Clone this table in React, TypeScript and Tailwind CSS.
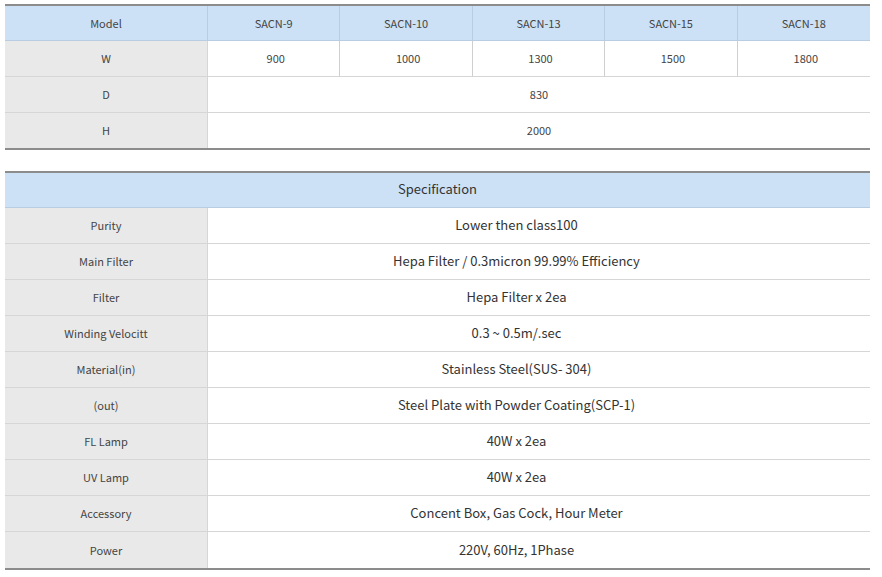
const models = ["SACN-9", "SACN-10", "SACN-13", "SACN-15", "SACN-18"];
const widths = ["900", "1000", "1300", "1500", "1800"];

const specs: [string, string][] = [
	["Purity", "Lower then class100"],
	["Main Filter", "Hepa Filter / 0.3micron 99.99% Efficiency"],
	["Filter", "Hepa Filter x 2ea"],
	["Winding Velocitt", "0.3 ~ 0.5m/.sec"],
	["Material(in)", "Stainless Steel(SUS- 304)"],
	["(out)", "Steel Plate with Powder Coating(SCP-1)"],
	["FL Lamp", "40W x 2ea"],
	["UV Lamp", "40W x 2ea"],
	["Accessory", "Concent Box, Gas Cock, Hour Meter"],
	["Power", "220V, 60Hz, 1Phase"],
];

const label = "flex items-center justify-center bg-[#e9e9e9] border-r border-[#d6d6d6] text-[11px] text-[#444]";

const App = () => {
	return (
		<main
			className="w-[882px] h-[577px] bg-white px-[5px] pt-[4px] box-border"
			style={{ fontFamily: '"Noto Sans CJK KR", "Noto Sans", sans-serif' }}>
			{/* size table */}
			<div className="w-[865px] border-t-2 border-b-2 border-[#8c8c8c] grid grid-cols-[203px_repeat(5,1fr)]">
				<div className="h-[35px] flex items-center justify-center bg-[#cce1f6] border-b border-r border-[#b9cde2] text-[11px] text-[#444]">
					Model
				</div>
				{models.map((m, i) => (
					<div
						key={m}
						className={`h-[35px] flex items-center justify-center bg-[#cce1f6] border-b border-[#b9cde2] text-[11px] text-[#444] ${i < 4 ? "border-r" : ""}`}>
						{m}
					</div>
				))}

				<div className={`${label} h-[36px] border-b border-b-[#d6d6d6]`}>W</div>
				{widths.map((w, i) => (
					<div
						key={w}
						className={`h-[36px] pl-[4px] flex items-center justify-center border-b border-[#d6d6d6] text-[11px] text-[#444] ${i < 4 ? "border-r border-r-[#cfcfcf]" : ""}`}>
						{w}
					</div>
				))}

				<div className={`${label} h-[36px] border-b border-b-[#d6d6d6]`}>D</div>
				<div className="col-span-5 h-[36px] flex items-center justify-center border-b border-[#d6d6d6] text-[11px] text-[#444]">
					830
				</div>

				<div className={`${label} h-[35px]`}>H</div>
				<div className="col-span-5 h-[35px] flex items-center justify-center text-[11px] text-[#444]">
					2000
				</div>
			</div>

			{/* spec table */}
			<div className="mt-[21px] w-[865px] border-t-2 border-b-2 border-[#8c8c8c]">
				<div className="h-[35px] pb-[3px] flex items-center justify-center bg-[#cce1f6] border-b border-[#b9cde2] text-[13px] text-[#333]">
					Specification
				</div>
				{specs.map(([k, v], i) => (
					<div
						key={k}
						className={`h-[36px] grid grid-cols-[203px_1fr] ${i < specs.length - 1 ? "border-b border-[#d6d6d6]" : ""}`}>
						<div className={label}>{k}</div>
						<div className="pr-[45px] pb-[1px] flex items-center justify-center text-[13px] text-[#333]">{v}</div>
					</div>
				))}
			</div>
		</main>
	);
};

export default App;
